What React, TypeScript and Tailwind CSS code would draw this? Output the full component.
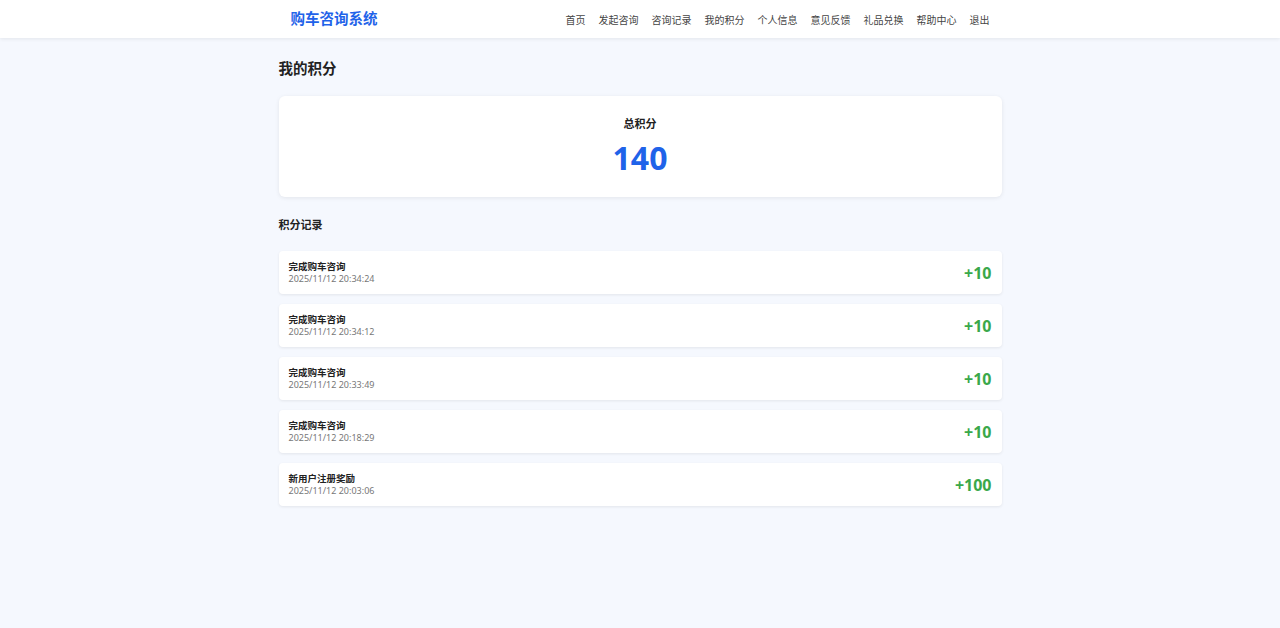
const navItems = ['首页', '发起咨询', '咨询记录', '我的积分', '个人信息', '意见反馈', '礼品兑换', '帮助中心', '退出']

const records = [
  { title: '完成购车咨询', time: '2025/11/12 20:34:24', points: 10 },
  { title: '完成购车咨询', time: '2025/11/12 20:34:12', points: 10 },
  { title: '完成购车咨询', time: '2025/11/12 20:33:49', points: 10 },
  { title: '完成购车咨询', time: '2025/11/12 20:18:29', points: 10 },
  { title: '新用户注册奖励', time: '2025/11/12 20:03:06', points: 100 },
]

export default function App() {
  return (
    <div
      className="min-h-screen bg-[#f5f8fe] text-[#222]"
      style={{ fontFamily: '"Noto Sans", "Noto Sans CJK SC", sans-serif' }}
    >
      {/* Header */}
      <header className="h-[38px] bg-white shadow-[0_1px_4px_rgba(0,0,0,0.08)]">
        <div className="mx-auto flex h-full w-[723px] items-center justify-between pl-[12px] pr-[12px]">
          <div className="text-[14.5px] font-bold text-[#1f63e9]">购车咨询系统</div>
          <nav className="flex items-center gap-[13px] pt-[2px]">
            {navItems.map(item => (
              <a key={item} className="text-[10px] text-[#444] cursor-pointer">{item}</a>
            ))}
          </nav>
        </div>
      </header>

      <main className="mx-auto w-[723px] pt-[20px]">
        <h1 className="text-[14.5px] font-bold leading-[20px] text-[#222]">我的积分</h1>

        {/* Total */}
        <div className="mt-[18px] rounded-[6px] bg-white pt-[20px] pb-[17px] text-center shadow-[0_1px_4px_rgba(0,0,0,0.08)]">
          <p className="text-[11px] font-bold leading-[16px] text-[#222]">总积分</p>
          <p className="mt-[4px] text-[32px] font-bold leading-[44px] text-[#1f63e9]">140</p>
        </div>

        <h2 className="mt-[20px] text-[11px] font-bold leading-[16px] text-[#222]">积分记录</h2>

        {/* Records */}
        <div className="mt-[18px] flex flex-col gap-[10px]">
          {records.map((r, i) => (
            <div
              key={i}
              className="flex items-center justify-between rounded-[4px] bg-white px-[10px] py-[9px] shadow-[0_1px_3px_rgba(0,0,0,0.08)]"
            >
              <div>
                <p className="text-[9.5px] font-bold leading-[13px] text-[#222]">{r.title}</p>
                <p className="text-[9px] leading-[12px] text-[#777]">{r.time}</p>
              </div>
              <span className="text-[16px] font-bold text-[#3aa84a]">+{r.points}</span>
            </div>
          ))}
        </div>
      </main>
    </div>
  )
}
